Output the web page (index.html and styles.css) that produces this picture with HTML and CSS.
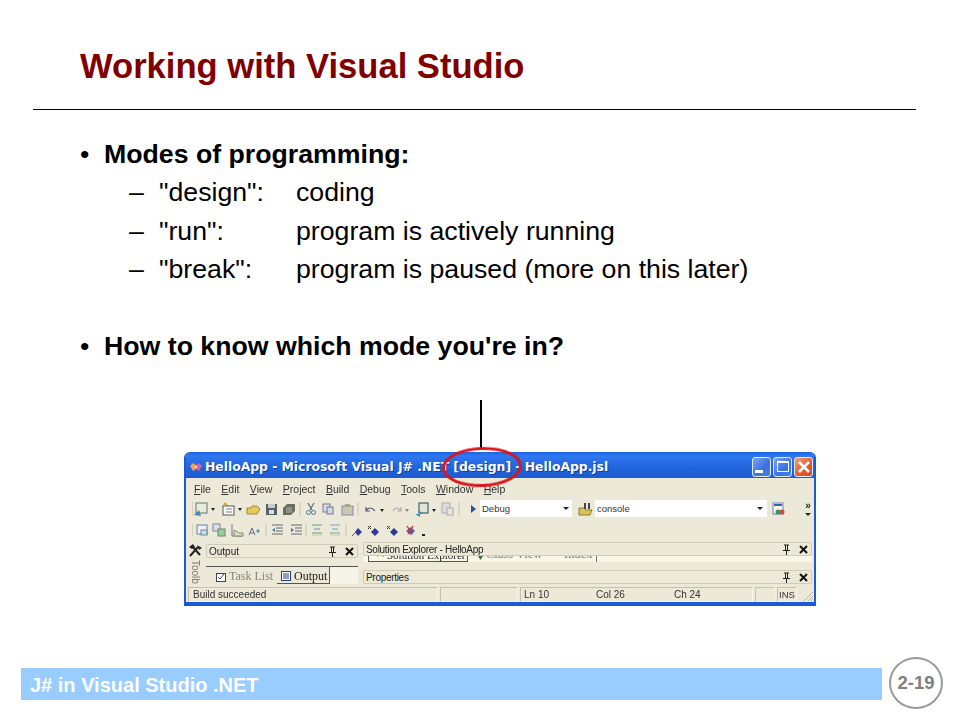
FILE: index.html
```html
<!DOCTYPE html>
<html lang="en">
<head>
<meta charset="utf-8">
<title>Working with Visual Studio</title>
<link rel="stylesheet" href="styles.css">
</head>
<body>
<div class="slide">
  <h1 class="title">Working with Visual Studio</h1>
  <hr class="rule">
  <ul class="points">
    <li class="point"><span class="bullet">•</span><b>Modes of programming:</b></li>
    <li class="sub"><span>–</span><span>"design":</span><span>coding</span></li>
    <li class="sub"><span>–</span><span>"run":</span><span>program is actively running</span></li>
    <li class="sub"><span>–</span><span>"break":</span><span>program is paused (more on this later)</span></li>
    <li class="point gap"><span class="bullet">•</span><b>How to know which mode you're in?</b></li>
  </ul>
  <div class="figure">
    <div class="pointer"></div>
    <div class="window">
      <div class="titlebar">
        <svg class="appicon" viewBox="0 0 12 10" width="12" height="10"><path d="M0 4 3 1l3 2v4L3 9z" fill="#f0a050"/><path d="M6 3l3-2 3 3-3 5-3-2z" fill="#d8609a"/><circle cx="6" cy="5" r="1.300" fill="#f6e0d0"/></svg>
        <span class="wintitle">HelloApp - Microsoft Visual J# .NET [design] - HelloApp.jsl</span>
        <div class="wincontrols">
          <span class="winbtn"><i class="min"></i></span>
          <span class="winbtn"><i class="max"></i></span>
          <span class="winbtn close">
            <svg viewBox="0 0 14 14" width="14" height="14"><path d="M2 2l10 10M12 2L2 12" stroke="#fff" stroke-width="2.600" fill="none"/></svg>
          </span>
        </div>
      </div>
      <div class="menubar">
        <span><u>F</u>ile</span><span><u>E</u>dit</span><span><u>V</u>iew</span><span><u>P</u>roject</span><span><u>B</u>uild</span><span><u>D</u>ebug</span><span><u>T</u>ools</span><span><u>W</u>indow</span><span><u>H</u>elp</span>
      </div>
      <div class="toolbar one">
        <svg class="tools" viewBox="0 0 268 18" width="268" height="18">
          <path d="M0 2v14" stroke="#bdb9a4"/>
          <rect x="4" y="3" width="11" height="10" fill="#e8ecd8" stroke="#5a7a7a"/><path d="M2 15l5-5 2 6z" fill="#4a86b8"/><path d="M19 8l2 3 2-3z" fill="#222"/>
          <rect x="31" y="6" width="11" height="9" fill="#fff" stroke="#555"/><path d="M33 2l3 3h-5z" fill="#d8a830"/><path d="M34 9h6M34 12h6" stroke="#777"/><path d="M46 8l2 3 2-3z" fill="#222"/>
          <path d="M55 14V8h4l1-2h5l3 3-3 5z" fill="#e9c85c" stroke="#9a8a3a"/>
          <rect x="74" y="4" width="11" height="11" fill="#56606a"/><rect x="76" y="4" width="7" height="4" fill="#c8ccd0"/><rect x="77" y="10" width="5" height="4" fill="#ddd"/>
          <path d="M91 8l4-4h8v7l-4 4h-8z" fill="#6a6e62"/><path d="M94 7h6v6h-6z" fill="#8c9184"/>
          <path d="M108 2v14" stroke="#c8c4b0"/>
          <path d="M116 3l4 7M122 3l-4 7" stroke="#667" stroke-width="1.200"/><circle cx="116.500" cy="12.500" r="2" fill="none" stroke="#47a"/><circle cx="121.500" cy="12.500" r="2" fill="none" stroke="#47a"/>
          <rect x="131" y="4" width="7" height="8" fill="#dde" stroke="#778"/><rect x="135" y="7" width="6" height="7" fill="#cde" stroke="#778"/>
          <rect x="150" y="6" width="11" height="9" fill="#cbc8b0" stroke="#88a"/><rect x="153" y="4" width="5" height="3" fill="#a8a590"/>
          <path d="M166 2v14" stroke="#c8c4b0"/>
          <path d="M174 11c2-4 6-4 9 0M174 7v4h4" stroke="#557" stroke-width="1.200" fill="none"/><path d="M188 9l2 3 2-3z" fill="#222"/>
          <path d="M201 11c2-4 5-4 8 0M209 7v4h-4" stroke="#aaa" stroke-width="1.200" fill="none"/><path d="M213 9l2 3 2-3z" fill="#888"/>
          <rect x="227" y="3" width="9" height="10" fill="#dfe6d8" stroke="#345"/><path d="M223 14h8l-3-3v6z" fill="#2b8fc4"/><path d="M240 9l2 3 2-3z" fill="#222"/>
          <rect x="250" y="3" width="8" height="10" fill="#ddd" stroke="#aaa"/><rect x="255" y="8" width="6" height="7" fill="#e8e6d8" stroke="#aaa"/>
          <path d="M267 2v14" stroke="#c8c4b0"/>
        </svg>
        <svg class="playmark" viewBox="0 0 5 8" width="5" height="8"><path d="M0 0l5 4-5 4z" fill="#2b4fa8"/></svg>
        <span class="combo debug"><span>Debug</span><i class="arrow"></i></span>
        <svg class="find" viewBox="0 0 16 14" width="16" height="14"><path d="M1 13V6h5l2 2h6l-2 5z" fill="#d9c25a" stroke="#8a7a30"/><path d="M7 1v6M11 1v6" stroke="#444" stroke-width="2"/></svg>
        <span class="combo console"><span>console</span><i class="arrow"></i></span>
        <svg class="props" viewBox="0 0 14 14" width="14" height="14"><rect x="1" y="1" width="10" height="11" fill="#f4f4f4" stroke="#6a86b8"/><path d="M2 3h8" stroke="#3a62b0" stroke-width="2"/><circle cx="6" cy="10" r="2.500" fill="#3d9a50"/><circle cx="10" cy="10" r="2.500" fill="#c0503c"/></svg>
        <span class="more">»<i class="arrow"></i></span>
      </div>
      <div class="toolbar two">
        <svg class="tools" viewBox="0 0 240 18" width="240" height="18">
          <path d="M0 2v14" stroke="#bdb9a4"/>
          <rect x="5" y="4" width="10" height="9" fill="#eef" stroke="#66809a"/><rect x="9" y="9" width="6" height="5" fill="#cdd" stroke="#68a"/>
          <rect x="21" y="3" width="7" height="7" fill="#dde" stroke="#789"/><rect x="26" y="8" width="7" height="7" fill="#9c9" stroke="#686"/>
          <path d="M40 3v12h11" stroke="#778" fill="none"/><path d="M42 9l5 3h4v3h-9z" fill="#e0dcc0" stroke="#887"/>
          <path d="M57 14l3-7 3 7M58 12h4" stroke="#668" fill="none"/><path d="M64 10h4M66 8v4" stroke="#38a" fill="none"/>
          <path d="M74 2v14" stroke="#c8c4b0"/>
          <path d="M80 4h11M84 7h7M84 10h7M80 13h11" stroke="#667"/><path d="M83 7l-3 2 3 2z" fill="#47a"/>
          <path d="M99 4h11M103 7h7M103 10h7M99 13h11" stroke="#667"/><path d="M99 7l3 2-3 2z" fill="#47a"/>
          <path d="M114 2v14" stroke="#c8c4b0"/>
          <path d="M120 4h10M122 8h6M120 12h10" stroke="#6a9a9a"/><path d="M120 14h10" stroke="#cc9"/>
          <path d="M138 4h10M140 8h6M138 12h10" stroke="#6aaac0"/><path d="M138 14h10" stroke="#cc9"/>
          <path d="M154 2v14" stroke="#c8c4b0"/>
          <path d="M160 15l5-5" stroke="#555"/><path d="M166 7l4 4-4 4-3-4z" fill="#2e3a9a"/>
          <path d="M176 5l3 3M176 8l3-3" stroke="#333"/><path d="M183 7l4 4-4 4-4-4z" fill="#2e3a9a"/>
          <path d="M195 5l3 3M195 8l3-3" stroke="#333"/><path d="M202 7l4 4-4 4-4-4z" fill="#2e3a9a"/>
          <path d="M219 6l4 4-4 4-5-4z" fill="#5c5ca8"/><path d="M215 5l5 8M221 5l-5 8" stroke="#c33" stroke-width="1.400"/>
          <rect x="230" y="13" width="3" height="2" fill="#222"/>
        </svg>
      </div>
      <div class="panels">
        <div class="toolbox"><svg viewBox="0 0 14 14" width="14" height="14"><path d="M2 13L10 4M4 3l8 9" stroke="#222" stroke-width="2"/><path d="M1 4l4-3 2 3-3 2zM9 2l5 3-3 2z" fill="#222"/></svg><span class="toolb">Toolb</span></div>
        <div class="leftpanel">
          <div class="panelhead"><span>Output</span><span class="headicons"><svg viewBox="0 0 7 11" width="7" height="11"><path d="M1 1h5M2.500 1v5M4.500 1v5M0 6.500h7M3.500 7v4" stroke="#222" fill="none"/></svg><svg viewBox="0 0 9 9" width="9" height="9"><path d="M1 1l7 7M8 1L1 8" stroke="#111" stroke-width="2" fill="none"/></svg></span></div>
          <div class="tabs">
            <span class="tab dim"><svg viewBox="0 0 10 10" width="10" height="10"><rect x=".5" y="1.500" width="9" height="8" fill="#fff" stroke="#444"/><path d="M2 5l2 2 4-5" stroke="#444" fill="none"/></svg>Task List</span>
            <span class="tab active"><svg viewBox="0 0 10 10" width="10" height="10"><rect x=".5" y=".5" width="9" height="9" fill="#fff" stroke="#2a3a7a"/><path d="M2 3h6M2 5h6M2 7h6" stroke="#2a3a7a"/></svg>Output</span>
            <span class="tabfill"></span>
          </div>
        </div>
        <div class="rightpanel">
          <div class="panelhead tight"><span>Solution Explorer - HelloApp</span><span class="headicons"><svg viewBox="0 0 7 11" width="7" height="11"><path d="M1 1h5M2.500 1v5M4.500 1v5M0 6.500h7M3.500 7v4" stroke="#222" fill="none"/></svg><svg viewBox="0 0 9 9" width="9" height="9"><path d="M1 1l7 7M8 1L1 8" stroke="#111" stroke-width="2" fill="none"/></svg></span></div>
          <div class="cutoff">
            <span class="cuttab"><svg class="cuticon" viewBox="0 0 10 4" width="10" height="4"><path d="M0 0h4L2 3zM5 0h5L7 3z" fill="#6a5a20"/></svg>Solution Explorer</span>
            <svg class="cutmark" viewBox="0 0 5 4" width="5" height="4"><path d="M0 0h5L2.500 4z" fill="#4a6a3a"/></svg>
            <span class="cuttext">Class View</span>
            <span class="cuttext idx">Index</span>
          </div>
          <div class="panelhead tight lower"><span>Properties</span><span class="headicons"><svg viewBox="0 0 7 11" width="7" height="11"><path d="M1 1h5M2.500 1v5M4.500 1v5M0 6.500h7M3.500 7v4" stroke="#222" fill="none"/></svg><svg viewBox="0 0 9 9" width="9" height="9"><path d="M1 1l7 7M8 1L1 8" stroke="#111" stroke-width="2" fill="none"/></svg></span></div>
        </div>
      </div>
      <div class="statusbar">
        <span class="cell msg">Build succeeded</span>
        <span class="cell blank"></span>
        <span class="cell pos"><span class="ln">Ln 10</span><span class="col">Col 26</span><span class="ch">Ch 24</span></span>
        <span class="cell tiny"></span>
        <span class="cell ins">INS</span>
        <svg class="resize" viewBox="0 0 12 12" width="12" height="12"><path d="M11 2L2 11M11 6l-5 5M11 9l-2 2" stroke="#b8b4a0" fill="none"/></svg>
      </div>
    </div>
    <div class="circle"></div>
  </div>
  <div class="footer">
    <div class="footbar">J# in Visual Studio .NET</div>
    <div class="pagenum">2-19</div>
  </div>
</div>
</body>
</html>
```
FILE: styles.css
```css
* { box-sizing: border-box; }
html, body { margin: 0; padding: 0; background: #fff; }
body { font-family: "Liberation Sans", Arial, sans-serif; color: #000; }
.slide { width: 960px; height: 720px; overflow: hidden; display: flex; flex-direction: column; }
.title { margin: 0; padding: 46px 0 0 80px; height: 109px; flex: none; font-size: 34.600px; line-height: 40px; font-weight: bold; color: #800000; white-space: nowrap; }
.rule { margin: 0 44px 0 33px; border: 0; height: 1px; background: #000; flex: none; }
.points { list-style: none; margin: 25px 0 0; padding: 0; font-size: 26.700px; line-height: 38.400px; }
.point { display: flex; padding-left: 80px; height: 38.400px; }
.bullet { width: 24px; }
.gap { margin-top: 38.400px; }
.sub { display: grid; grid-template-columns: 30px 137px auto; padding-left: 129px; height: 38.400px; }
.figure { position: relative; flex: none; margin-top: 35px; padding: 52px 0 0 184px; }
.pointer { position: absolute; left: 480px; top: 0; width: 2px; height: 50px; background: #000; }
.circle { position: absolute; left: 442px; top: 47px; width: 80px; height: 40px; border: 3px solid #d8161c; border-radius: 50%; transform: rotate(-2deg); }
.window { width: 632px; height: 154px; background: #ece9d8; border: solid #1a5ad6; border-width: 0 2px 4px; border-radius: 6px 6px 0 0; display: flex; flex-direction: column; font-size: 10px; overflow: hidden; color: #222; filter: blur(0.3px); }
.titlebar { height: 26px; flex: none; display: flex; align-items: center; padding: 3px 3px 0 3px; margin: 0 -2px; background: linear-gradient(#1a62e6, #2f78f0 15%, #2264dc 60%, #1c5cd2); color: #fff; }
.appicon { margin: 0 3px 0 3px; flex: none; }
.wintitle { font: bold 12.350px "DejaVu Sans", sans-serif; white-space: nowrap; text-shadow: 1px 1px 0 #0f3d9c; }
.wincontrols { margin-left: auto; display: flex; gap: 2px; }
.winbtn { width: 19px; height: 20px; border-radius: 3px; background: linear-gradient(135deg, #7ea6f0, #3a70e0 60%, #4a82ea); border: 1px solid #e2ebfb; display: flex; align-items: center; justify-content: center; }
.winbtn i.min { width: 8px; height: 3px; background: #fff; margin: 9px 6px 0 0; }
.winbtn i.max { width: 12px; height: 11px; border: 1px solid #fff; border-top-width: 2px; }
.winbtn.close { background: linear-gradient(135deg, #f0a080, #e05a30 60%, #d84c20); }
.menubar { height: 20px; flex: none; display: flex; align-items: center; padding: 1px 0 0 8px; gap: 10.400px; color: #333; font-size: 10.500px; }
.menubar u { text-decoration-thickness: 1px; }
.toolbar { flex: none; display: flex; align-items: center; padding-left: 6px; }
.toolbar.one { height: 21px; }
.toolbar.two { height: 22px; }
.tools { flex: none; }
.playmark { margin: 0 4px 0 11px; flex: none; }
.combo { height: 17px; background: #fff; display: flex; align-items: center; justify-content: space-between; padding: 0 3px 0 2px; font-size: 9.500px; flex: none; color: #333; }
.combo.debug { width: 92px; }
.combo.console { width: 172px; margin-left: 1px; padding-right: 4px; }
.arrow { width: 0; height: 0; border: 3px solid transparent; border-top: 3px solid #222; border-bottom: 0; display: block; }
.find { flex: none; margin-left: 6px; }
.props { margin-left: 5px; flex: none; }
.more { margin-left: 19px; font-size: 10px; line-height: 8px; font-weight: bold; display: flex; flex-direction: column; align-items: center; }
.more .arrow { margin-top: 3px; }
.panels { height: 43px; flex: none; display: flex; }
.toolbox { width: 18px; flex: none; display: flex; flex-direction: column; align-items: center; padding-top: 2px; gap: 3px; }
.toolb { writing-mode: vertical-rl; font-size: 10px; color: #777; line-height: 10px; }
.leftpanel { width: 152px; flex: none; margin-left: 2px; display: flex; flex-direction: column; padding-top: 3px; }
.panelhead { height: 14px; flex: none; display: flex; align-items: center; justify-content: space-between; padding: 0 3px 0 2px; border: 1px solid #cfcbb8; background: #ece9d8; border-radius: 2px; font-size: 10px; white-space: nowrap; }
.panelhead.tight { letter-spacing: -0.300px; }
.headicons { display: flex; align-items: center; gap: 9px; }
.headicons svg { flex: none; }
.tabs { display: flex; margin-top: 8px; border-top: 1px solid #555; height: 18px; }
.tab { display: flex; align-items: center; gap: 3px; font: 12px "Liberation Serif", serif; white-space: nowrap; flex: none; height: 17px; padding-top: 2px; }
.tab.dim { color: #86867c; width: 71px; padding-left: 10px; }
.tab.active { width: 53px; padding-left: 4px; color: #222; border-right: 1px solid #555; border-bottom: 1px solid #555; }
.tabfill { flex: 1; height: 17px; background: #f6f4e8; }
.rightpanel { flex: 1; display: flex; flex-direction: column; margin: 1px 2px 0 5px; min-width: 0; }
.cutoff { height: 6px; flex: none; background: #f8f7e8; overflow: hidden; display: flex; font: 12.500px/12px "Liberation Serif", serif; color: #777; padding-left: 5px; margin-bottom: 8px; }
.cuttab, .cuttext { margin-top: -8px; height: 14px; flex: none; white-space: nowrap; }
.cuttab { width: 100px; border: 1px solid #555; padding-left: 7px; color: #222; display: flex; align-items: flex-end; gap: 1px; font-size: 11px; }
.cuticon { flex: none; margin-bottom: 3px; }
.cutmark { flex: none; margin: 0 3px 0 10px; }
.cuttext { width: 68px; }
.cuttext.idx { width: 43px; border-right: 1px solid #777; padding-left: 10px; }
.statusbar { height: 18px; flex: none; display: flex; align-items: stretch; padding: 3px 0 0 2px; gap: 2px; font-size: 10px; color: #333; }
.cell { border: 1px solid #c4c0ac; border-bottom-color: #f6f5ee; border-right-color: #f6f5ee; display: flex; align-items: center; padding: 0 3px; }
.msg { width: 250px; padding-left: 4px; }
.blank { width: 78px; }
.pos { width: 233px; }
.ln { width: 72px; }
.col { width: 78px; }
.tiny { width: 20px; }
.ins { width: 20px; padding: 0; justify-content: center; font-size: 9.500px; }
.resize { align-self: flex-end; flex: none; margin-left: auto; }
.footer { margin-top: auto; margin-bottom: 11px; display: flex; padding-left: 21px; flex: none; align-items: center; height: 52px; }
.footbar { width: 861px; height: 32px; background: #99ccff; color: #fff; font-size: 20px; font-weight: bold; line-height: 34px; padding-left: 9px; margin-top: 2px; }
.pagenum { width: 54px; height: 52px; margin-left: 7px; border: 2px solid #999; border-radius: 50%; color: #808080; font-size: 18.500px; font-weight: bold; display: flex; align-items: center; justify-content: center; }
```
